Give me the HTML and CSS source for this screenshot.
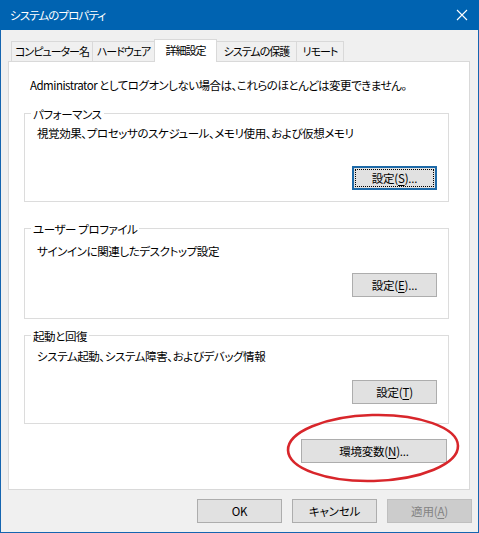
FILE: index.html
```html
<!DOCTYPE html>
<html lang="ja">
<head>
<meta charset="utf-8">
<title>システムのプロパティ</title>
<link rel="stylesheet" href="styles.css">
</head>
<body>
<div class="window">
  <div class="titlebar">
    <span class="title">システムのプロパティ</span>
    <span class="close">
      <svg width="12" height="12" viewBox="0 0 12 12"><path d="M1 1 L11 11 M11 1 L1 11" stroke="#fff" stroke-width="1.1" fill="none"/></svg>
    </span>
  </div>
  <div class="client">
    <div class="tabs">
      <div class="tab t1">コンピューター名</div>
      <div class="tab t2">ハードウェア</div>
      <div class="tab t3 active">詳細設定</div>
      <div class="tab t4">システムの保護</div>
      <div class="tab t5">リモート</div>
    </div>
    <div class="panel">
      <p class="intro">Administrator としてログオンしない場合は、これらのほとんどは変更できません。</p>
      <div class="group g1">
        <div class="legend">パフォーマンス</div>
        <p class="desc">視覚効果、プロセッサのスケジュール、メモリ使用、および仮想メモリ</p>
        <div class="actions"><button class="btn focus"><span class="focus-ring">設定(<u>S</u>)...</span></button></div>
      </div>
      <div class="group g2">
        <div class="legend">ユーザー プロファイル</div>
        <p class="desc">サインインに関連したデスクトップ設定</p>
        <div class="actions"><button class="btn">設定(<u>E</u>)...</button></div>
      </div>
      <div class="group g3">
        <div class="legend">起動と回復</div>
        <p class="desc">システム起動、システム障害、およびデバッグ情報</p>
        <div class="actions"><button class="btn">設定(<u>T</u>)</button></div>
      </div>
      <div class="env-row">
        <button class="btn env">環境変数(<u>N</u>)...</button>
        <svg class="circle" width="180" height="76" viewBox="0 0 180 76"><ellipse cx="89" cy="37" rx="85" ry="33" transform="rotate(-1.5 89 37)" fill="none" stroke="#d8262b" stroke-width="2.6"/></svg>
      </div>
    </div>
    <div class="footer">
      <button class="btn">OK</button>
      <button class="btn">キャンセル</button>
      <button class="btn disabled">適用(<u>A</u>)</button>
    </div>
  </div>
</div>
</body>
</html>
```
FILE: styles.css
```css
* { box-sizing: border-box; }
html, body { margin: 0; padding: 0; }
body {
  width: 479px;
  height: 533px;
  overflow: hidden;
  background: #f0f0f0;
  font-family: "Noto Sans CJK JP", sans-serif;
  font-size: 11.5px;
  letter-spacing: -0.4px;
  font-feature-settings: "palt" 1;
  color: #000;
}
.window {
  width: 479px;
  height: 533px;
  border: 1px solid #1565b0;
  border-top: none;
  background: #f0f0f0;
  display: flex;
  flex-direction: column;
}
.titlebar {
  height: 30px;
  margin: 0 -1px;
  background: #0063b1;
  color: #fff;
  display: flex;
  align-items: center;
  justify-content: space-between;
  padding: 0 11px 0 10px;
}
.title { line-height: 16px; letter-spacing: -0.9px; }
.close { display: flex; width: 12px; height: 12px; }
.client {
  flex: 1;
  padding: 9px 8px 0 7px;
  display: flex;
  flex-direction: column;
}
.tabs {
  display: flex;
  align-items: flex-end;
  height: 22px;
  padding-left: 3px;
  position: relative;
  z-index: 1;
}
.tab {
  height: 20px;
  border: 1px solid #d9d9d9;
  border-bottom: none;
  margin-left: -1px;
  text-align: center;
  line-height: 19px;
  white-space: nowrap;
  font-size: 11px;
  letter-spacing: -1px;
  background: #f0f0f0;
}
.tab:first-child { margin-left: 0; }
.t1 { width: 82px; }
.t2 { width: 63px; }
.t3 { width: 63px; }
.t4 { width: 81px; }
.t5 { width: 48px; }
.tab.active {
  height: 23px;
  margin-bottom: -1px;
  background: #fff;
  line-height: 21px;
}
.panel {
  height: 429px;
  border: 1px solid #d9d9d9;
  background: #fff;
  padding: 15px 20px 0 15px;
  display: flex;
  flex-direction: column;
}
.intro {
  margin: 0 0 0 6px;
  line-height: 16px;
  letter-spacing: -0.5px;
}
.group {
  border: 1px solid #dcdcdc;
  padding: 0 11px 0 12px;
}
.legend {
  display: table;
  margin: -8px 0 0 -6px;
  padding: 0 2px;
  background: #fff;
  line-height: 16px;
}
.desc {
  margin: 0;
  line-height: 16px;
}
.actions {
  display: flex;
  justify-content: flex-end;
}
.g1 { margin-top: 20px; height: 89px; }
.g1 .desc { margin-top: 3px; }
.g1 .actions { margin-top: 25px; }
.g2 { margin-top: 26px; height: 91px; }
.g2 .desc { margin-top: 6px; }
.g2 .actions { margin-top: 14px; }
.g3 { margin-top: 16px; height: 89px; }
.g3 .desc { margin-top: 4px; }
.g3 .actions { margin-top: 16px; }
.btn {
  width: 85px;
  height: 24px;
  border: 1px solid #adadad;
  background: #e1e1e1;
  font-family: inherit;
  font-size: 11.5px;
  letter-spacing: -0.2px;
  font-feature-settings: "palt" 1;
  color: #000;
  padding: 0;
  display: flex;
  align-items: center;
  justify-content: center;
}
.btn u { text-underline-offset: 2px; }
.btn.focus {
  border: 2px solid #1e6aa8;
  padding: 1px;
}
.focus-ring {
  flex: 1;
  align-self: stretch;
  border: 1px dotted #000;
  display: flex;
  align-items: center;
  justify-content: center;
}
.btn.disabled {
  background: #cccccc;
  border-color: #bfbfbf;
  color: #838383;
}
.env-row {
  margin-top: 15px;
  display: flex;
  justify-content: flex-end;
  padding-right: 2px;
  position: relative;
}
.btn.env { width: 146px; }
.circle {
  position: absolute;
  left: 260px;
  top: -28px;
  pointer-events: none;
}
.footer {
  display: flex;
  justify-content: flex-end;
  gap: 10px;
  margin-top: 9px;
  margin-right: -2px;
}
```
